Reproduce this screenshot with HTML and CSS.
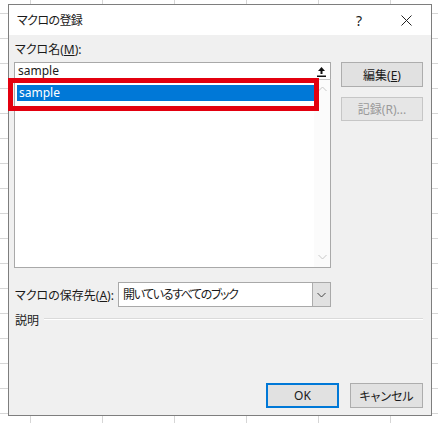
FILE: index.html
```html
<!DOCTYPE html>
<html lang="ja">
<head>
    <meta charset="UTF-8">
    <title>マクロの登録</title>
    <link rel="stylesheet" href="styles.css">
</head>
<body>

    <div class="dialog">
        <div class="titlebar">
            <span class="title">マクロの登録</span>
            <span class="help">?</span>
            <span class="close">
                <svg width="11" height="11" viewBox="0 0 11 11"><path d="M0.5 0.5 L10.5 10.5 M10.5 0.5 L0.5 10.5" stroke="#222" stroke-width="1" fill="none"/></svg>
            </span>
        </div>

        <div class="content">
            <div class="top">
                <div class="main-col">
                    <div class="label">マクロ名(<u>M</u>):</div>
                    <div class="name-input">
                        <span class="value">sample</span>
                        <span class="up-btn">
                            <!-- arrow with a bar under it -->
                            <svg width="11" height="11" viewBox="0 0 11 11">
                                <path d="M5.5 1 L9 5 L6.5 5 L6.5 8 L4.5 8 L4.5 5 L2 5 Z" fill="#111"/>
                                <rect x="1" y="9.5" width="9" height="1.5" fill="#111"/>
                            </svg>
                        </span>
                    </div>
                    <div class="list">
                        <div class="items">
                            <div class="item selected">sample</div>
                        </div>
                        <div class="scrollbar">
                            <svg width="9" height="6" viewBox="0 0 9 6"><path d="M0.5 5 L4.5 1 L8.5 5" stroke="#c8c8c8" fill="none"/></svg>
                            <svg width="9" height="6" viewBox="0 0 9 6"><path d="M0.5 1 L4.5 5 L8.5 1" stroke="#c8c8c8" fill="none"/></svg>
                        </div>
                        <!-- red marker drawn over the selected row -->
                        <div class="mark"></div>
                    </div>
                </div>
                <div class="side-col">
                    <button class="btn">編集(<u>E</u>)</button>
                    <button class="btn" disabled>記録(R)...</button>
                </div>
            </div>

            <div class="store-row">
                <span class="store-label">マクロの保存先(<u>A</u>):</span>
                <div class="combo">
                    <span class="value">開いているすべてのブック</span>
                    <span class="drop-btn">
                        <svg width="9" height="6" viewBox="0 0 9 6"><path d="M0.5 1 L4.5 5 L8.5 1" stroke="#444" fill="none"/></svg>
                    </span>
                </div>
            </div>

            <div class="desc-row">
                <span>説明</span>
                <span class="sep"></span>
            </div>

            <div class="footer">
                <button class="btn default">OK</button>
                <button class="btn">キャンセル</button>
            </div>
        </div>
    </div>

</body>
</html>
```

FILE: styles.css
```css
body {
    margin: 0;
    height: 423px;
    overflow: hidden;
    font-family: "Noto Sans", "Noto Sans CJK JP", sans-serif;
    font-size: 12px;
    font-feature-settings: "palt";
    color: #1a1a1a;
    /* spreadsheet grid behind the dialog */
    background-color: #fff;
    background-image:
        linear-gradient(#d6d6d6 1px, transparent 1px),
        linear-gradient(90deg, #d6d6d6 1px, transparent 1px);
    background-size: 72px 25px;
    background-position: 30px 13px;
}
.dialog {
    margin: 4px 0 0 8px;
    width: 424px;
    height: 412px;
    box-sizing: border-box;
    border: 1px solid #7e7e7e;
    background-color: #f0f0f0;
    display: flex;
    flex-direction: column;
}
.titlebar {
    height: 30px;
    background-color: #fff;
    display: flex;
    align-items: center;
    padding-left: 8px;
    flex-shrink: 0;
}
.title {
    flex: 1;
    letter-spacing: -0.6px;
}
.help {
    width: 12px;
    margin-right: 33px;
    font-size: 14px;
}
.close {
    display: flex;
    margin-right: 19px;
}
.content {
    flex: 1;
    display: flex;
    flex-direction: column;
    padding: 7px 8px 7px 5px;
}
.top {
    display: flex;
    gap: 10px;
}
.main-col {
    width: 317px;
}
.label {
    line-height: 16px;
    margin-bottom: 4px;
    padding-left: 1px;
}
.name-input {
    height: 18px;
    box-sizing: border-box;
    border: 1px solid #a9a9a9;
    background-color: #fff;
    display: flex;
    align-items: center;
    padding-left: 3px;
}
.name-input .value {
    flex: 1;
    line-height: 16px;
}
.up-btn {
    display: flex;
    width: 14px;
    justify-content: center;
    margin-right: 2px;
}
.list {
    position: relative;
    margin-top: -1px;
    height: 189px;
    box-sizing: border-box;
    border: 1px solid #a9a9a9;
    border-top-color: #c4c4c4;
    background-color: #fff;
    display: flex;
}
.items {
    flex: 1;
    padding: 5px 0 0 2px;
}
.item {
    height: 16px;
    line-height: 16px;
    padding-left: 2px;
}
.item.selected {
    background-color: #0078d7;
    color: #fff;
}
.scrollbar {
    width: 16px;
    background-color: #fbfbfb;
    display: flex;
    flex-direction: column;
    justify-content: space-between;
    align-items: center;
    padding: 6px 0 7px;
}
.mark {
    position: absolute;
    left: -7px;
    top: -2px;
    width: 311px;
    height: 33px;
    box-sizing: border-box;
    border: 5px solid #e3000f;
}
.side-col {
    display: flex;
    flex-direction: column;
    gap: 10px;
    padding-top: 20px;
}
.btn {
    font: inherit;
    font-feature-settings: "palt";
    color: #1a1a1a;
    width: 82px;
    height: 25px;
    border: 1px solid #adadad;
    background-color: #e1e1e1;
    padding: 0;
}
.btn:disabled {
    height: 24px;
    color: #9a9a9a;
    border-color: #c6c6c6;
    background-color: #e6e6e6;
}
.store-row {
    display: flex;
    align-items: center;
    margin-top: 14px;
}
.store-label {
    width: 104px;
    padding-left: 1px;
    box-sizing: border-box;
}
.combo {
    width: 213px;
    height: 25px;
    box-sizing: border-box;
    border: 1px solid #a9a9a9;
    background-color: #fff;
    display: flex;
    align-items: stretch;
}
.combo .value {
    flex: 1;
    line-height: 23px;
    padding-left: 4px;
    letter-spacing: -1.4px;
}
.drop-btn {
    width: 17px;
    border-left: 1px solid #adadad;
    background-color: #e1e1e1;
    display: flex;
    align-items: center;
    justify-content: center;
}
.desc-row {
    display: flex;
    align-items: flex-start;
    margin-top: 5px;
    line-height: 18px;
    padding-left: 1px;
}
.sep {
    flex: 1;
    margin: 6px 0 0 5px;
    border-top: 1px solid #dadada;
    border-bottom: 1px solid #fff;
}
.footer {
    margin-top: auto;
    display: flex;
    justify-content: flex-end;
    gap: 11px;
}
.footer .btn {
    width: 73px;
}
.btn.default {
    border: 2px solid #0078d7;
}
```
